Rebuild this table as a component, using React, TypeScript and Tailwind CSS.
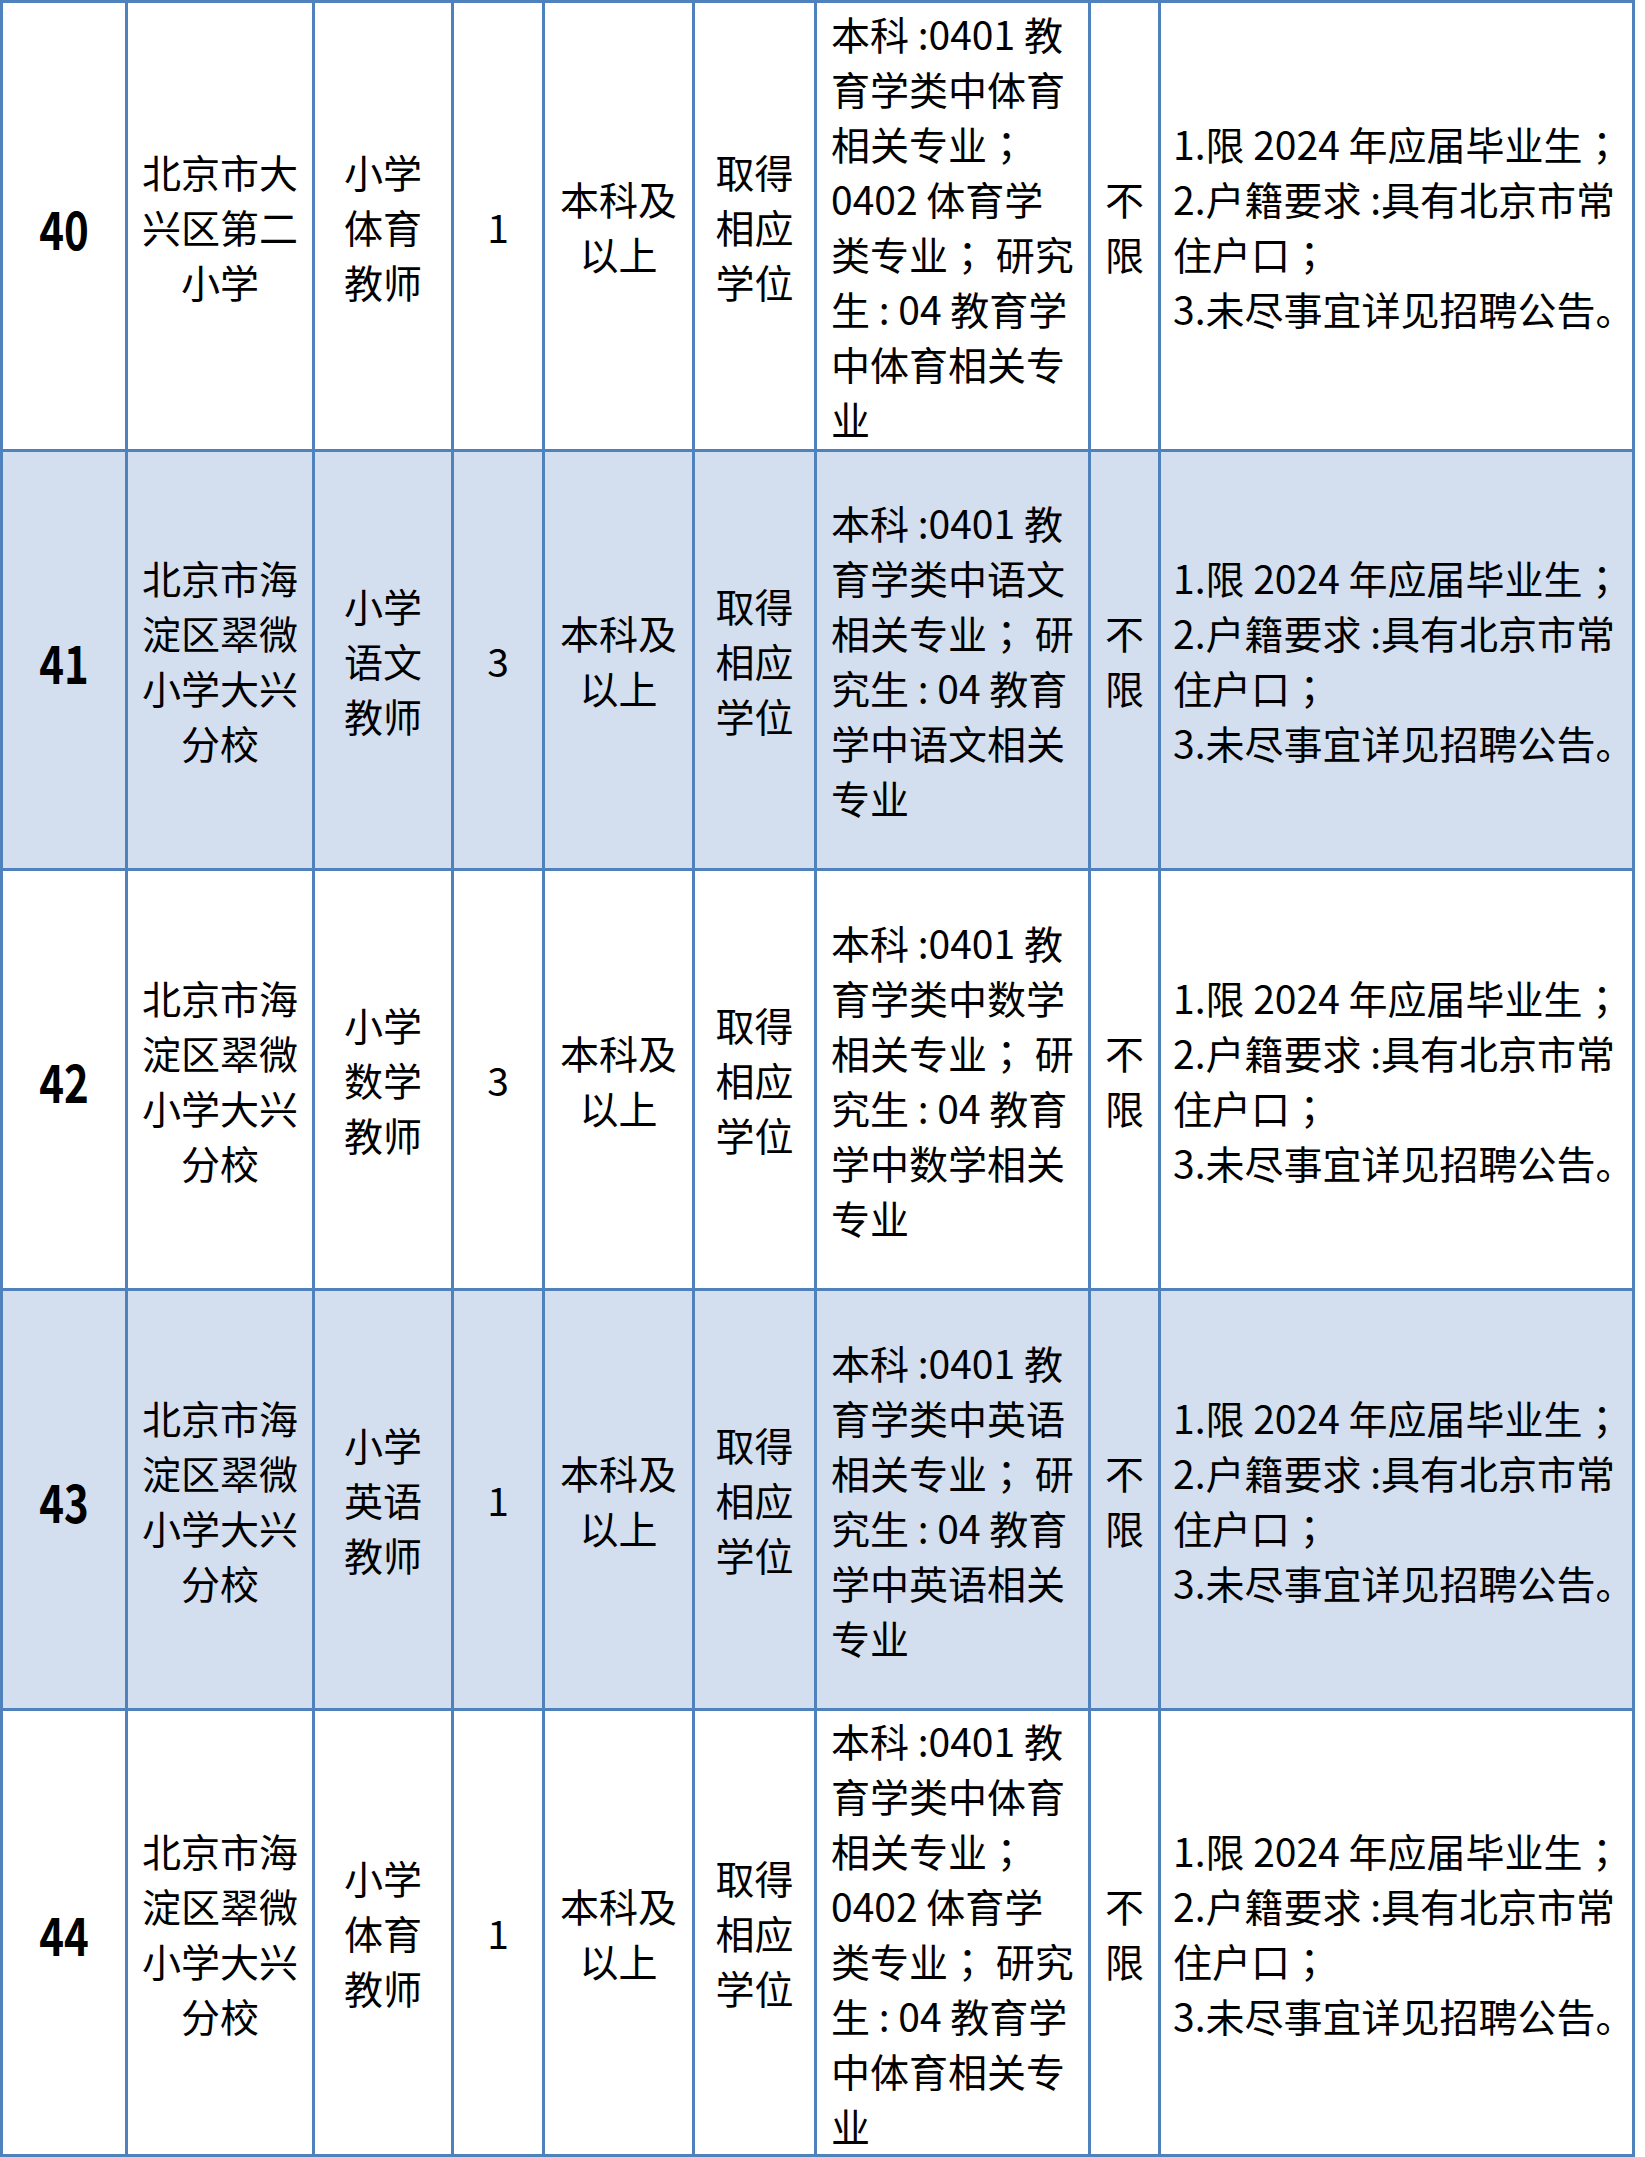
import React from "react";

type Row = {
  no: string;
  school: string[];
  pos: string[];
  n: string;
  major: string[];
  shaded: boolean;
};

const peMajor = [
  "本科 :0401 教",
  "育学类中体育",
  "相关专业；",
  "0402 体育学",
  "类专业； 研究",
  "生 : 04 教育学",
  "中体育相关专",
  "业",
];

const subjMajor = (s: string) => [
  "本科 :0401 教",
  `育学类中${s}`,
  "相关专业； 研",
  "究生 : 04 教育",
  `学中${s}相关`,
  "专业",
];

const cuiwei = ["北京市海", "淀区翠微", "小学大兴", "分校"];

const rows: Row[] = [
  { no: "40", school: ["北京市大", "兴区第二", "小学"], pos: ["小学", "体育", "教师"], n: "1", major: peMajor, shaded: false },
  { no: "41", school: cuiwei, pos: ["小学", "语文", "教师"], n: "3", major: subjMajor("语文"), shaded: true },
  { no: "42", school: cuiwei, pos: ["小学", "数学", "教师"], n: "3", major: subjMajor("数学"), shaded: false },
  { no: "43", school: cuiwei, pos: ["小学", "英语", "教师"], n: "1", major: subjMajor("英语"), shaded: true },
  { no: "44", school: cuiwei, pos: ["小学", "体育", "教师"], n: "1", major: peMajor, shaded: false },
];

const req = [
  "1.限 2024 年应届毕业生；",
  "2.户籍要求 :具有北京市常",
  "住户口；",
  "3.未尽事宜详见招聘公告。",
];

function LineText({ text }: { text: string }) {
  const parts = text.split("；");
  return (
    <>
      {parts.map((p, i) => (
        <React.Fragment key={i}>
          {p}
          {i < parts.length - 1 && (
            <span style={{ fontFamily: '"Noto Sans CJK TC", "Noto Sans CJK SC", sans-serif' }}>；</span>
          )}
        </React.Fragment>
      ))}
    </>
  );
}

function Lines({ lines, align }: { lines: string[]; align: "center" | "left" }) {
  return (
    <div className={align === "center" ? "flex flex-col items-center" : "flex flex-col items-start"}>
      {lines.map((l, i) => (
        <div key={i} className="whitespace-pre">
          <LineText text={l} />
        </div>
      ))}
    </div>
  );
}

export default function App() {
  return (
    <div
      className="w-[1645px] h-[2157px] bg-white text-black text-[39px] leading-[55px]"
      style={{ fontFamily: '"Noto Sans CJK SC", "Noto Sans", sans-serif' }}
    >
      <div className="w-[1635px] bg-[#4f81bd] p-[3px] grid gap-[3px] grid-cols-[122px_184px_136px_88px_147px_119px_271px_67px_471px] grid-rows-[446px_416px_417px_417px_443px]">
        {rows.map((r) => {
          const bg = r.shaded ? "bg-[#d3dfee]" : "bg-white";
          return (
            <React.Fragment key={r.no}>
              <div className={`${bg} flex items-center justify-center`}>
                <span className="inline-block font-bold text-[42px] scale-y-[1.25]">{r.no}</span>
              </div>
              <div className={`${bg} flex items-center justify-center`}>
                <Lines lines={r.school} align="center" />
              </div>
              <div className={`${bg} flex items-center justify-center`}>
                <Lines lines={r.pos} align="center" />
              </div>
              <div className={`${bg} flex items-center justify-center`}>
                <span>{r.n}</span>
              </div>
              <div className={`${bg} flex items-center justify-center`}>
                <Lines lines={["本科及", "以上"]} align="center" />
              </div>
              <div className={`${bg} flex items-center justify-center`}>
                <Lines lines={["取得", "相应", "学位"]} align="center" />
              </div>
              <div className={`${bg} flex items-center pl-[14px]`}>
                <Lines lines={r.major} align="left" />
              </div>
              <div className={`${bg} flex items-center justify-center`}>
                <Lines lines={["不", "限"]} align="center" />
              </div>
              <div className={`${bg} flex items-center pl-[12px]`}>
                <Lines lines={req} align="left" />
              </div>
            </React.Fragment>
          );
        })}
      </div>
    </div>
  );
}
